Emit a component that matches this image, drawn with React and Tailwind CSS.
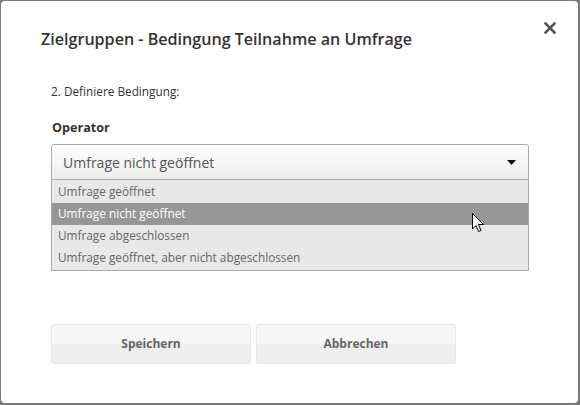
import React from "react";

function Cursor() {
  return (
    <svg width="14" height="21" viewBox="0 0 14 21" className="absolute left-[420px] top-[33px]">
      <path d="M0.5 0.5 L0.5 16 L4 12.5 L6.5 18.5 L9 17.5 L6.5 11.5 L11.5 11.5 Z" fill="#fff" stroke="#000" strokeWidth="1" strokeLinejoin="miter" />
    </svg>
  );
}

export default function App() {
  const items = [
    "Umfrage geöffnet",
    "Umfrage nicht geöffnet",
    "Umfrage abgeschlossen",
    "Umfrage geöffnet, aber nicht abgeschlossen",
  ];
  return (
    <div className="w-[580px] h-[405px] bg-[#7a7a7a] p-[1px] pr-[2px] pb-[2px]" style={{ fontFamily: '"Open Sans", sans-serif' }}>
      <div className="relative w-full h-full bg-white rounded-[4px] flex flex-col">
        <div className="flex items-start justify-between pl-[40px] pr-[22px] pt-[26px]">
          <h1 className="text-[16.1px] font-semibold text-[#333] leading-[24px]">Zielgruppen - Bedingung Teilnahme an Umfrage</h1>
          <svg width="12" height="12" viewBox="0 0 12 12" className="mt-[-5px]">
            <path d="M1.5 1.5 L10.5 10.5 M10.5 1.5 L1.5 10.5" stroke="#555" strokeWidth="2.6" strokeLinecap="square" />
          </svg>
        </div>
        <div className="pl-[50px] pr-[49px] mt-[32px]">
          <p className="text-[11.8px] text-[#333] leading-[16px]">2. Definiere Bedingung:</p>
          <p className="text-[12.6px] font-bold text-[#333] leading-[16px] mt-[21px] pl-[1px]">Operator</p>
          <div className="mt-[8px]">
            <div className="h-[36px] border border-[#aaa] rounded-t-[3px] bg-gradient-to-b from-white to-[#ececec] flex items-center justify-between pl-[11px] pr-[12px]">
              <span className="text-[14px] text-[#555]">Umfrage nicht geöffnet</span>
              <svg width="9" height="5" viewBox="0 0 9 5"><path d="M0 0 H9 L4.5 5 Z" fill="#111" /></svg>
            </div>
            <div className="relative border border-t-0 border-[#aaa] bg-[#e8e8e8] py-[1px]">
              {items.map((t, i) => (
                <div
                  key={t}
                  className={
                    "h-[22px] flex items-center pl-[6px] text-[11.8px] " +
                    (i === 1 ? "bg-[#969696] text-white" : "text-[#666]")
                  }
                >
                  {t}
                </div>
              ))}
              <Cursor />
            </div>
          </div>
          <div className="flex gap-[5px] mt-[53px]">
            {["Speichern", "Abbrechen"].map((t) => (
              <div
                key={t}
                className="w-[200px] h-[40px] rounded-[3px] border border-[#e6e6e6] bg-gradient-to-b from-[#f6f6f6] from-50% to-[#eeeeee] to-50% flex items-center justify-center text-[12px] font-bold text-[#666]"
              >
                {t}
              </div>
            ))}
          </div>
        </div>
      </div>
    </div>
  );
}
